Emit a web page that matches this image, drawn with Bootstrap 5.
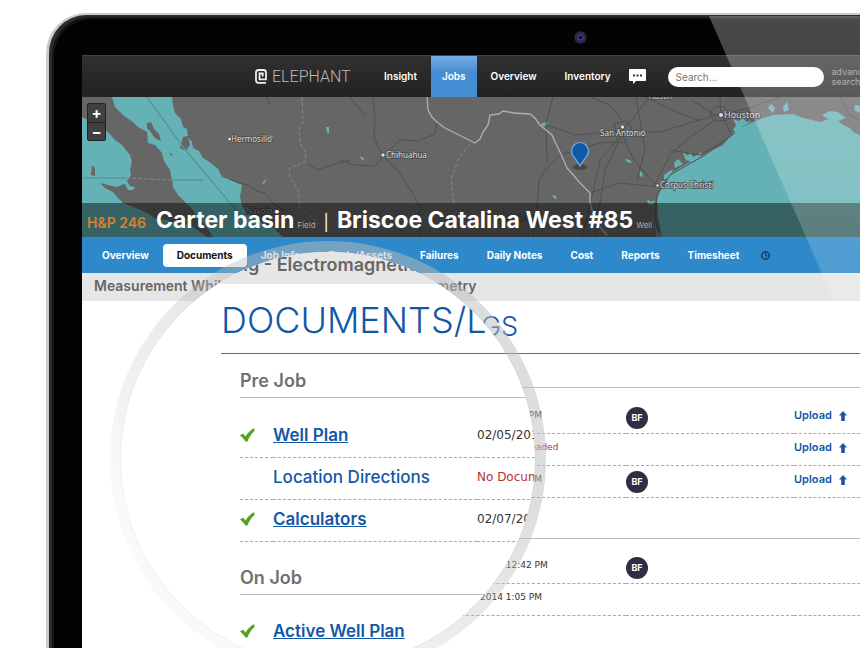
<!DOCTYPE html>
<html lang="en">
<head>
<meta charset="utf-8">
<meta name="viewport" content="width=device-width, initial-scale=1">
<title>Elephant - Documents/Logs</title>
<link rel="stylesheet" href="https://cdn.jsdelivr.net/npm/bootstrap@5.3.0/dist/css/bootstrap.min.css">
<style>
  body { font-family: Inter, "Open Sans", sans-serif; font-size: 10px; background: #fff; overflow: hidden; }
  a { color: #1358a6; }
  .laptop { margin: 13px 0 0 46px; min-height: calc(100vh - 13px); border: 3px solid #c9cccf; border-width: 2px 0 0 3px; border-top-left-radius: 40px; background: #030303; box-shadow: inset 3px 2px 0 #2b2e31, inset 5px 4px 0 #141516; }
  .bezel { height: 40px; padding: 16px 0 0 525px; }
  .screen { margin-left: 33px; min-height: calc(100vh - 55px); background: #fff; }
  .topbar { height: 42px; background: linear-gradient(#303030, #222); border-top: 1px solid #444; }
  .brand { width: 288px; padding-left: 173px; color: #b9b9b9; font: 300 16px Roboto, sans-serif; gap: 5px; }
  .topbar .nav-link { color: #fff; font-weight: 600; padding: 0 14px; line-height: 41px; }
  .topbar .nav-link.active { background: linear-gradient(#76abe0, #468ed3 40%); padding: 0 11px; }
  .messages { margin: 0 22px 0 4px; }
  .search { width: 156px; height: 20px; min-height: 20px; border: 0; border-radius: 10px; padding: 0 8px; font-size: 10px; background: #fff; }
  .search::placeholder { color: #777; }
  .adv { color: #999; font-size: 9px; line-height: 10px; text-decoration: none; width: 48px; }
  .map { height: 140px; background: #666; }
  .map-canvas { width: 100%; height: 100%; }
  .zoomers { top: 6px; left: 5px; width: 19px; border: 1px solid #222; border-radius: 2px; }
  .zoomers button { height: 18px; border: 0; padding: 0; background: #404040; color: #fff; font: 700 15px/16px Inter, sans-serif; }
  .zoomers button + button { border-top: 1px solid #222; }
  .well-title { bottom: 0; left: 0; right: 0; height: 34px; padding-left: 5px; background: rgba(0,0,0,.45); color: #fff; }
  .well-title h1 { font-size: 23px; line-height: 34px; font-weight: 700; }
  .rig { color: #d9812c; font-size: 14px; font-weight: 600; width: 69px; }
  .kind { color: #aaa; font-size: 8px; margin-left: 3px; }
  .tabs { height: 36px; background: #2d89c9; padding-left: 6px; }
  .tabs .nav-link { color: #fff; font-weight: 700; font-size: 10px; line-height: 23px; padding: 0 14px; border-radius: 4px; }
  .tabs .nav-link.active { background: #fff; color: #111; }
  .tabs .nav-link.clock { padding: 0 8px; }
  .strip { height: 28px; background: #e6e6e6; color: #666; font-size: 14px; font-weight: 600; line-height: 25px; padding-left: 12px; }
  .page-head { color: #1358a6; font-weight: 300; }
  .base-head { font-size: 27px; line-height: 52px; margin-left: 180px; border-bottom: 1px solid #2f74c0; }
  .docs { margin-left: 180px; }
  .group-rule { height: 34px; border-bottom: 1px solid #bbb; }
  .group-rule.later { height: 41px; }
  .doc-table { width: 100%; table-layout: fixed; }
  .doc-table td { padding: 0; border-bottom: 1px dashed #aaa; vertical-align: bottom; }
  .docs td { height: 32px; }
  .docs tr:first-child td { height: 45px; }
  .stamp { font-family: "DejaVu Sans", sans-serif; color: #333; }
  .missing { color: #b5322c; }
  .docs td > * { display: block; line-height: 12px; margin-bottom: 12px; }
  .docs td .stamp { font-size: 9px; }
  .docs td .upload { font-size: 11px; font-weight: 600; text-decoration: none; }
  .docs td .who { width: 22px; height: 22px; line-height: 21px; margin-bottom: 4px; border-radius: 50%; background: #322d45; color: #fff; font-size: 9px; font-weight: 700; text-align: center; }
  .lens { left: 28px; top: 186px; width: 436px; height: 436px; padding: 11px; border-radius: 50%; background: linear-gradient(to bottom left, rgba(188,188,188,.5) 30%, rgba(200,200,200,.1) 78%); }
  .glass { width: 414px; height: 414px; border-radius: 50%; background: #fff; box-shadow: 0 0 2px rgba(0,0,0,.1); }
  .glass .strip { height: 32px; font-size: 18px; padding: 0; margin-left: -102px; white-space: nowrap; }
  .lens-head { font-size: 36px; line-height: 66px; padding-top: 3px; margin-left: 100px; border-bottom: 1px solid #2f74c0; white-space: nowrap; }
  .lens-docs { margin-left: 119px; white-space: nowrap; }
  .phase { color: #707070; font-weight: 600; font-size: 18px; line-height: 32px; padding-top: 11px; border-bottom: 1px solid #bbb; }
  .phase.later { padding-top: 20px; }
  .lens-docs td { height: 42px; font-size: 17px; line-height: 24px; padding-bottom: 10px; }
  .lens-docs tr:first-child td { height: 59px; }
  .lens-docs td .stamp { font-size: 12px; }
  .lens-docs td a { font-weight: 600; }
  .lens-docs td a.todo { font-weight: 500; text-decoration: none; }
  .glare { left: 709px; top: 16px; width: 151px; height: 285px; pointer-events: none; }
</style>
<script src="https://cdn.jsdelivr.net/npm/bootstrap@5.3.0/dist/js/bootstrap.bundle.min.js"></script>
</head>
<body>
<svg width="0" height="0" class="position-absolute" aria-hidden="true">
  <symbol id="tick" viewBox="0 0 16 16"><path d="M0 7.500 3 5.500 5.500 8.500 C7.500 5 10.500 2 14 0 L14.500 3 C11 6 9 9.500 7.500 13.500 L5.500 13.500 C4 11 2 9 0 7.500Z" fill="#4fa51b"/></symbol>
  <symbol id="up" viewBox="0 0 8 10"><path d="M4 0 8 4.500H5.800V10H2.200V4.500H0Z" fill="#1358a6"/></symbol>
</svg>
<div class="laptop">
  <div class="bezel">
    <svg class="d-block" width="13" height="13" viewBox="0 0 13 13"><circle cx="6.500" cy="6.500" r="6.200" fill="#292c33"/><circle cx="6.500" cy="6.500" r="3.600" fill="#191245"/><circle cx="6.500" cy="6.500" r="2.700" fill="none" stroke="#4b35b0" stroke-width="1.200"/><circle cx="7" cy="6" r="1" fill="#120a33"/></svg>
  </div>
  <div class="screen position-relative">
    <header class="topbar d-flex align-items-center overflow-hidden">
      <div class="brand d-flex align-items-center flex-shrink-0">
        <svg width="12" height="15" viewBox="0 0 12 15"><path d="M11 13.800H3.500Q1 13.800 1 11.300V3.500Q1 1 3.500 1H8.500Q11 1 11 3.500V10.300H4.500V4.500H7.700V7.600" fill="none" stroke="#eee" stroke-width="1.800"/></svg>
        <span>ELEPHANT</span>
      </div>
      <nav class="nav flex-nowrap flex-shrink-0">
        <a class="nav-link" href="#">Insight</a>
        <a class="nav-link active" href="#">Jobs</a>
        <a class="nav-link" href="#">Overview</a>
        <a class="nav-link" href="#">Inventory</a>
      </nav>
      <a href="#" class="messages d-flex flex-shrink-0" aria-label="Messages"><svg width="17" height="15" viewBox="0 0 17 15"><path d="M1 0H16Q17 0 17 1V11Q17 12 16 12H7L4 15V12H1Q0 12 0 11V1Q0 0 1 0Z" fill="#fff"/><path d="M4 5.500h2v2H4zM7.500 5.500h2v2h-2zM11 5.500h2v2h-2z" fill="#333"/></svg></a>
      <input class="search form-control me-2 flex-shrink-0" type="search" placeholder="Search..." aria-label="Search">
      <a class="adv flex-shrink-0" href="#">advanced search</a>
    </header>
    <div class="map position-relative overflow-hidden">
      <svg class="map-canvas d-block" viewBox="82 97 778 140" preserveAspectRatio="xMinYMin slice">
        <g fill="#64b2b5">
          <path d="M82 117 92 122 100 127 108 132 114 139 122 145 130 155 132 162 130 170 131 175 127 181 130 186 135 187 133 190 128 190 125 184 121 185 117 187 108 185 100 183 105 188 113 192 118 198 123 203 134 207 147 213 156 219 167 220 178 224 190 225 207 237H82Z"/>
          <path d="M112 97 115 107 124 116 133 122 138 127 147 132 148 143 155 145 162 153 164 161 170 170 172 180 173 187 178 195 183 200 193 210 197 217 203 222 213 237H283L274 228 263 223 256 218 247 213 242 206 240 197 242 185 230 180 222 177 218 169 213 165 208 161 203 158 199 151 193 148 192 142 188 137 187 129 183 127 181 119 175 113 173 106 172 97Z"/>
          <path d="M662 237 658 217 657 200 660 191 665 185 668 178 673 172 690 162 707 153 723 145 733 133 742 127 753 122 763 118 773 115 793 114 803 118 812 120 820 122 829 119 837 120 843 125 850 128 853 132 860 135V237Z"/>
          <path d="M733 119 739 121 743 117 746 122 752 121 742 127 737 133 733 130 736 125ZM682 151 688 156 690 152 693 157 702 152 700 158 692 162 686 160ZM664 175 668 172 673 169 670 177 664 180ZM674 163 678 159 683 164 675 168ZM768 108 771 104 775 108 773 113ZM783 107 787 102 789 110 784 112ZM822 115 830 111 838 112 846 118 838 121 828 119ZM855 105 860 106V113L854 110ZM647 199 651 202 655 200 653 205 648 204ZM653 212 657 230 662 237H657ZM625 159 630 160 632 163 627 162ZM639 171 642 172 643 177 640 176ZM542 123 548 122 546 126 541 126ZM552 195 556 196 557 199 554 198ZM359 156 364 158 363 161ZM326 127 329 127 329 133 327 133ZM262 183 267 178 264 184ZM269 135 274 137 269 138Z"/>
        </g>
        <path d="M147 123 151 122 154 129 159 134 161 141 155 138 150 131 147 128ZM183 137 188 136 190 145 186 151 180 148ZM92 165 95 168 95 176 91 175ZM169 152l4 3-2 1z" fill="#666"/>
        <g fill="none" stroke="#5a9699" stroke-width="1.500">
          <path d="M82 178H126M172 180H203M147 97 183 147 240 215"/>
        </g>
        <g fill="none" stroke="#505050">
          <path d="M267 97 270 105M230 179 240 183 250 186 257 191 265 193 275 205 287 212M308 164 317 170 328 166 350 160M373 97 375 120 374 137 378 147 385 158 398 170 406 183 412 192 420 208V237M340 160 355 165 375 166 385 154 400 140 418 141 435 134 437 122M553 97 546 123 547 163M547 125 575 135 622 131 660 132 700 120 720 114M622 131 634 117 643 105 650 97M622 134 600 160 590 205 582 237M622 134 634 160 655 185M622 134 605 170 595 237M560 155 545 170 539 180 537 210 533 237M560 155 600 143 625 142M590 193 620 183 648 186 656 186M655 184 670 155 690 137 715 120M720 97 721 115 732 135M715 115 690 99M721 114 750 108 780 97M645 97 672 110 700 121M636 97 645 150 637 180M350 97 365 116M670 150 700 155 722 142M840 97 850 115 860 120M590 97 610 105 622 120"/>
          <path d="M711 110 715 107 724 107 731 113 728 120 717 121 711 117ZM614 124 625 121 632 127 629 134 617 135ZM659 237 655 220 657 195 670 175 705 155 735 133"/>
        </g>
        <path d="M302 97 303 122 299 130 300 143 306 153 305 162 289 168 290 178 298 190 300 208 320 224M126 178 172 180M470 144 458 160 451 180 454 205" fill="none" stroke="#888" stroke-dasharray="4 2"/>
        <path d="M427 97 428 110 432 117 437 122 445 128 453 132 465 138 475 143 480 139 483 132 488 125 490 115 499 114 503 111 514 113 530 114 535 118 540 125 552 135 556 144 560 152 567 168 575 177 580 183 590 193 590 202 592 210 596 222 607 235" fill="none" stroke="#b0b0b0" stroke-width="1.300"/>
        <g fill="#ddd" stroke="#4a4a4a" stroke-width="1.500" paint-order="stroke" font-family="Noto Sans, sans-serif" font-size="8">
          <text x="231" y="142">Hermosillo</text><text x="386" y="158">Chihuahua</text><text x="600" y="136">San Antonio</text>
          <text x="724" y="118" font-size="9">Houston</text><text x="660" y="188">Corpus Christi</text><text x="649" y="99">Austin</text><text x="246" y="214" fill="#999">Navojoa</text><text x="503" y="220" fill="#777">Monclova</text>
          <circle cx="229.500" cy="139" r="1.500"/><circle cx="383" cy="155" r="1.700"/><circle cx="622.500" cy="127" r="1.700"/><circle cx="721" cy="115" r="2"/><circle cx="657.500" cy="185.500" r="1.300"/>
        </g>
        <ellipse cx="580" cy="167" rx="7" ry="3" fill="#333" opacity=".6"/>
        <path d="M580 166C577 160 571.500 156 571.500 151A8.300 8.300 0 0 1 588.500 151C588.500 156 583 160 580 166Z" fill="#0f5aa8" stroke="#79b0e0" stroke-width="1.200"/>
      </svg>
      <div class="zoomers position-absolute d-flex flex-column"><button type="button" aria-label="Zoom in">+</button><button type="button" aria-label="Zoom out">−</button></div>
      <div class="well-title position-absolute d-flex align-items-baseline text-nowrap">
        <span class="rig">H&amp;P 246</span>
        <h1 class="m-0">Carter basin</h1><span class="kind">Field</span>
        <span class="mx-2 fs-6">|</span>
        <h1 class="m-0">Briscoe Catalina West #85</h1><span class="kind">Well</span>
      </div>
    </div>
    <nav class="tabs nav flex-nowrap align-items-center text-nowrap">
      <a class="nav-link" href="#">Overview</a>
      <a class="nav-link active" href="#">Documents</a>
      <a class="nav-link" href="#">Job Info</a>
      <a class="nav-link" href="#">Tools/Assets</a>
      <a class="nav-link" href="#">Failures</a>
      <a class="nav-link" href="#">Daily Notes</a>
      <a class="nav-link" href="#">Cost</a>
      <a class="nav-link" href="#">Reports</a>
      <a class="nav-link" href="#">Timesheet</a>
      <a class="nav-link clock d-flex" href="#" aria-label="History"><svg width="9" height="9" viewBox="0 0 9 9"><path d="M4.500 2V5H6.500" fill="none" stroke="#183b56"/><circle cx="4.500" cy="4.500" r="3.700" fill="none" stroke="#183b56" stroke-width="1.400"/></svg></a>
    </nav>
    <div class="strip text-nowrap">Measurement While Drilling - Electromagnetic Telemetry</div>
    <main>
      <h2 class="page-head base-head mt-0 mb-0">DOCUMENTS/LOGS</h2>
      <section class="docs">
        <div class="group-rule"></div>
        <table class="doc-table">
          <colgroup><col style="width:189px"><col style="width:175px"><col style="width:168px"><col></colgroup>
          <tr><td></td><td><span class="stamp">02/05/2014 1:41 PM</span></td><td><span class="who">BF</span></td><td><a class="upload" href="#">Upload <svg class="ms-1" width="8" height="10"><use href="#up"/></svg></a></td></tr>
          <tr><td></td><td><span class="stamp missing">No Document Uploaded</span></td><td></td><td><a class="upload" href="#">Upload <svg class="ms-1" width="8" height="10"><use href="#up"/></svg></a></td></tr>
          <tr><td></td><td><span class="stamp">02/07/2014 1:04 PM</span></td><td><span class="who">BF</span></td><td><a class="upload" href="#">Upload <svg class="ms-1" width="8" height="10"><use href="#up"/></svg></a></td></tr>
        </table>
        <div class="group-rule later"></div>
        <table class="doc-table">
          <colgroup><col style="width:189px"><col style="width:175px"><col style="width:168px"><col></colgroup>
          <tr><td></td><td><span class="stamp">02/05/2014 12:42 PM</span></td><td><span class="who">BF</span></td><td></td></tr>
          <tr><td></td><td><span class="stamp">02/07/2014 1:05 PM</span></td><td></td><td></td></tr>
        </table>
      </section>
    </main>
    <aside class="lens position-absolute" aria-label="Magnified documents">
      <div class="glass overflow-hidden">
        <div class="strip">Measurement While Drilling - Electromagnetic Telemetry</div>
        <h2 class="page-head lens-head mt-0 mb-0">DOCUMENTS/L</h2>
        <div class="lens-docs">
          <h3 class="phase m-0">Pre Job</h3>
          <table class="doc-table">
            <colgroup><col style="width:33px"><col style="width:204px"><col></colgroup>
            <tr><td><svg width="16" height="16"><use href="#tick"/></svg></td><td><a href="#">Well Plan</a></td><td><span class="stamp">02/05/2014</span></td></tr>
            <tr><td></td><td><a class="todo" href="#">Location Directions</a></td><td><span class="stamp missing">No Document</span></td></tr>
            <tr><td><svg width="16" height="16"><use href="#tick"/></svg></td><td><a href="#">Calculators</a></td><td><span class="stamp">02/07/2014</span></td></tr>
          </table>
          <h3 class="phase later m-0">On Job</h3>
          <table class="doc-table">
            <colgroup><col style="width:33px"><col style="width:204px"><col></colgroup>
            <tr><td><svg width="16" height="16"><use href="#tick"/></svg></td><td><a href="#">Active Well Plan</a></td><td></td></tr>
          </table>
        </div>
      </div>
    </aside>
  </div>
</div>
<svg class="glare position-absolute" viewBox="0 0 151 285" aria-hidden="true"><defs><linearGradient id="sheen" x2="0" y2="1"><stop stop-color="#fff" stop-opacity=".28"/><stop offset="1" stop-color="#fff" stop-opacity=".15"/></linearGradient></defs><path d="M0 0H151V285H125Z" fill="url(#sheen)"/></svg>
</body>
</html>
